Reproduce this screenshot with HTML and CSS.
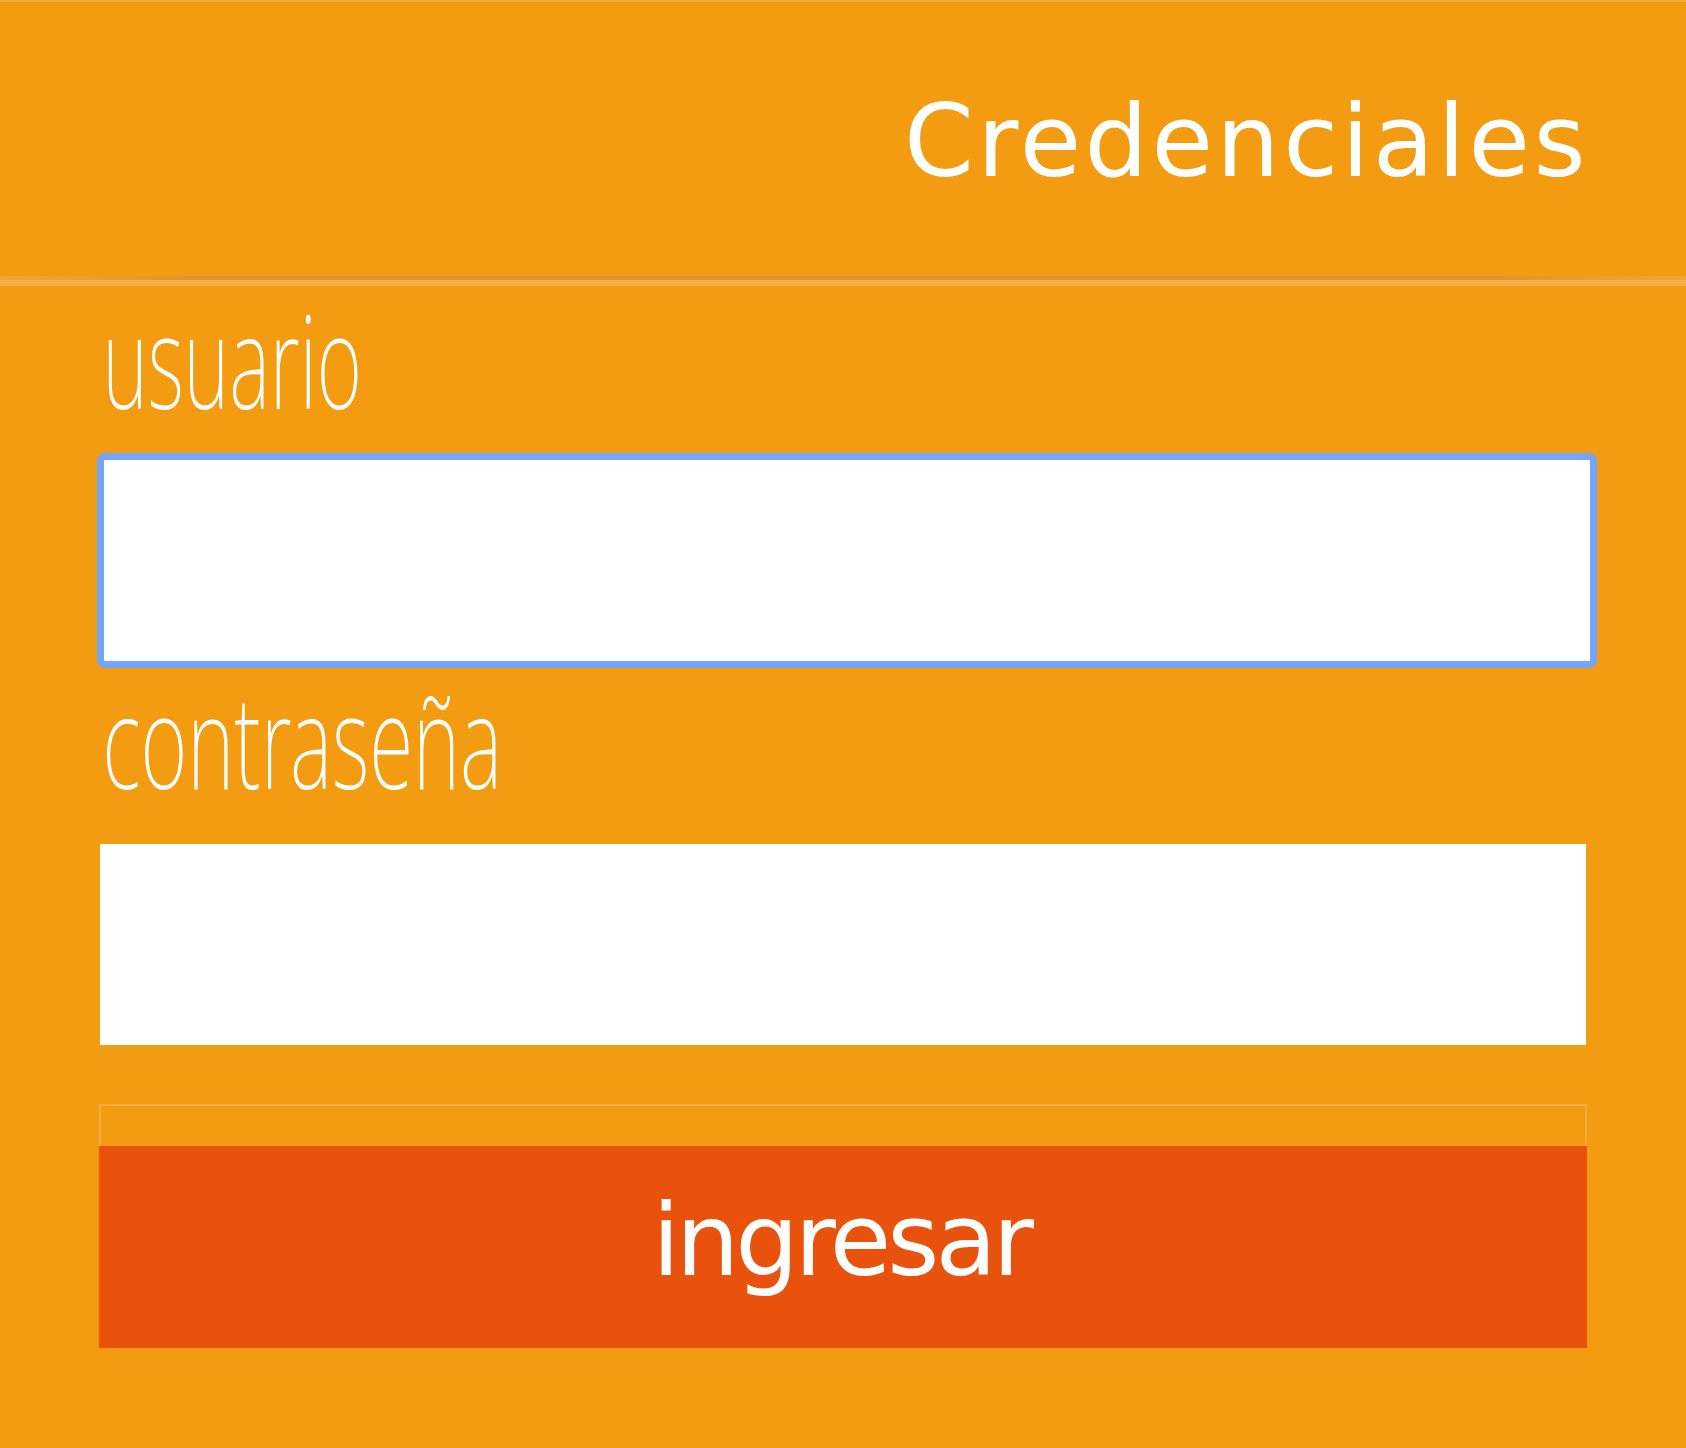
FILE: index.html
```html
<!DOCTYPE html>
<html lang="es">
<head>
<meta charset="utf-8">
<title>Credenciales</title>
<link rel="stylesheet" href="styles.css">
</head>
<body>
<div class="panel">
  <header class="panel-head">
    <h1 class="title">Credenciales</h1>
  </header>
  <div class="separator"></div>
  <form class="form" onsubmit="return false">
    <label class="field-label" for="usuario">usuario</label>
    <input class="field field-focused" id="usuario" type="text">
    <label class="field-label label-pass" for="clave">contraseña</label>
    <input class="field field-pass" id="clave" type="password">
    <div class="button-frame"></div>
    <button class="submit" type="submit">ingresar</button>
  </form>
</div>
</body>
</html>
```

FILE: styles.css
```css
html, body {
  margin: 0;
  padding: 0;
  background: #f39c12;
}

.panel {
  width: 1686px;
  height: 1448px;
  box-sizing: border-box;
  border-top: 2px solid #f5a937;
  background: #f39c12;
  overflow: hidden;
}

.panel-head {
  height: 274px;
  display: flex;
  justify-content: flex-end;
  align-items: flex-start;
  box-sizing: border-box;
  padding: 90px 97px 0 0;
}

.title {
  margin: 0;
  font-family: "DejaVu Sans", "Liberation Sans", sans-serif;
  font-weight: normal;
  font-size: 100px;
  line-height: 100px;
  letter-spacing: 3.4px;
  color: #ffffff;
}

.separator {
  height: 10px;
  box-sizing: border-box;
  border-top: 4px solid transparent;
  background:
    linear-gradient(to right, rgba(214,140,40,0.25), rgba(214,140,40,0.75) 12%, rgba(214,140,40,0.75) 88%, rgba(214,140,40,0.25)) top / 100% 4px no-repeat border-box,
    #f5ae48;
}

.form {
  display: flex;
  flex-direction: column;
  align-items: flex-start;
  padding-left: 100px;
}

.field-label {
  display: block;
  margin-top: 8px;
  height: 130px;
  font-family: "Noto Sans", "DejaVu Sans", sans-serif;
  font-weight: 200;
  font-size: 130px;
  line-height: 130px;
  color: #ffffff;
  white-space: nowrap;
  transform: scaleX(0.6);
  transform-origin: 6px 0;
}

.label-pass {
  margin-top: 6px;
  transform: scaleX(0.62);
}

.field {
  display: block;
  margin: 0;
  padding: 0;
  width: 1486px;
  height: 201px;
  border: 0;
  border-radius: 0;
  background: #ffffff;
  outline: none;
  box-sizing: content-box;
}

.field-focused {
  margin-top: 29px;
  margin-left: -3px;
  border: 7px solid #74a6fe;
  border-radius: 8px;
}

.field-pass {
  margin-top: 40px;
}

.button-frame {
  margin-top: 59px;
  margin-left: -1px;
  width: 1484px;
  height: 40px;
  border: 2px solid #f4ab47;
  border-bottom: 0;
}

.submit {
  display: block;
  margin: 0 0 0 -1px;
  width: 1488px;
  height: 202px;
  padding: 0 0 12px 0;
  border: 0;
  background: #e8520d;
  color: #ffffff;
  font-family: "DejaVu Sans", "Liberation Sans", sans-serif;
  font-size: 100px;
  line-height: 190px;
  letter-spacing: -4px;
  text-indent: -4px;
  cursor: pointer;
}
```
